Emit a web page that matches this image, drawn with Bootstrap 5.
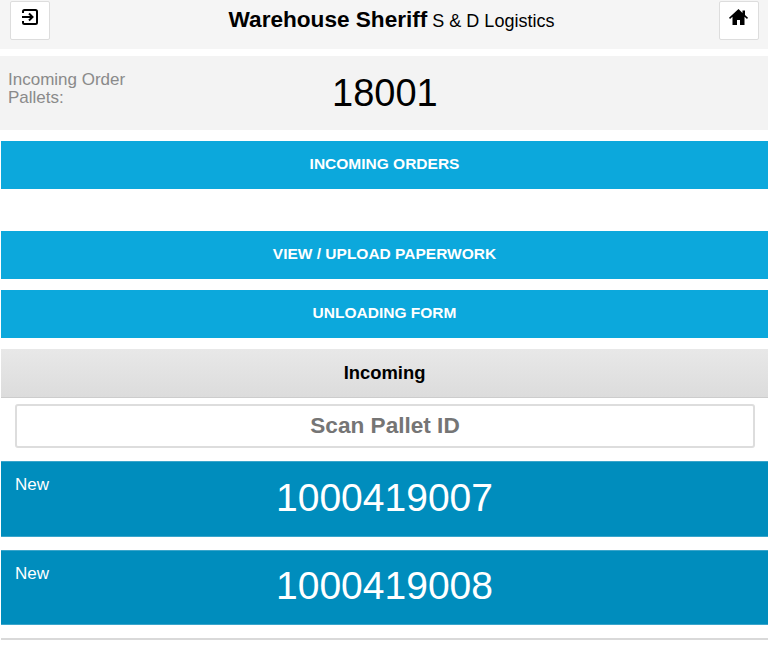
<!DOCTYPE html>
<html lang="en">
<head>
  <meta charset="UTF-8">
  <title>Warehouse Sheriff</title>
  <link href="https://cdn.jsdelivr.net/npm/bootstrap@5.3.0/dist/css/bootstrap.min.css" rel="stylesheet">
  <style>
    body { font-family: "Liberation Sans", Arial, sans-serif; background: #fff; color: #000; overflow: hidden; }
    .top-bar { height: 49px; background: #f5f5f5; padding: 1px 9px 0 10px; }
    .top-title { font-size: 18px; line-height: 1; padding-bottom: 9px; margin-left: 14px; white-space: nowrap; }
    .top-title strong { font-size: 22.6px; }
    .icon-btn { width: 40px; height: 39px; background: #fff; border: 1px solid #ddd; border-radius: 2px; padding: 0 0 8px; }
    .order-box { height: 74px; margin-top: 7px; background: #f3f3f3; }
    .order-label { width: 332px; padding: 15px 190px 0 8px; font-size: 17px; line-height: 18px; color: #8a8a8a; }
    .order-num { font-size: 38px; line-height: 1; padding-top: 18px; }
    .blue-btn { display: block; width: calc(100% - 1px); height: 48px; margin: 11px 0 0 1px; padding: 0 0 2px; background: #0ca8dc; color: #fff; border: 0; border-radius: 0; font-size: 15.5px; font-weight: 700; text-transform: uppercase; }
    .blue-btn:hover { background: #0ca8dc; color: #fff; }
    .blue-btn.far-gap { margin-top: 42px; }
    .list-bar { height: 49px; margin: 11px 0 0 1px; background: linear-gradient(#e8e8e8, #dcdcdc); border-bottom: 1px solid #ccc; font-size: 18.4px; font-weight: 700; }
    .scan-input.form-control { display: block; width: 740px; height: 44px; margin: 6px 0 13px 15px; border: 2px solid #ddd; border-radius: 3px; font-size: 22.6px; font-weight: 700; text-align: center; padding: 0; }
    .scan-input.form-control::placeholder { color: #757575; opacity: 1; }
    .pallet-row { height: 76px; margin-left: 1px; background: #008dbd; color: #fff; border: 1px solid #3aa5cb; border-width: 1px 0; }
    .pallet-row + .pallet-row { height: 75px; margin-top: 13px; }
    .pallet-state { left: 14px; top: 13px; font-size: 17px; line-height: 20px; }
    .pallet-id { font-size: 39px; line-height: 1; padding-top: 16px; }
    .pallet-row + .pallet-row .pallet-id { padding-top: 15px; }
    .end-rule { height: 2px; margin: 13px 0 0 1px; background: #d9d9d9; }
  </style>
</head>
<body>
  <div class="top-bar d-flex align-items-start justify-content-between">
    <button class="btn icon-btn d-flex align-items-center justify-content-center" type="button" aria-label="Sign out">
      <svg width="18" height="18" viewBox="0 0 18 18" fill="none" stroke="#000" stroke-width="2"><path d="M2 5V3.500A1.500 1.500 0 0 1 3.500 2h11A1.500 1.500 0 0 1 16 3.500v11a1.500 1.500 0 0 1-1.500 1.500h-11A1.500 1.500 0 0 1 2 14.500V13"/><path d="M1 9h10M8 5.500 11.500 9 8 12.500"/></svg>
    </button>
    <div class="top-title align-self-center"><strong>Warehouse Sheriff</strong> S &amp; D Logistics</div>
    <button class="btn icon-btn d-flex align-items-center justify-content-center" type="button" aria-label="Home">
      <svg width="19" height="16" viewBox="0 0 19 16" fill="#000"><path d="M9.500 0 0 8.800l1 1.100 2.500-2.200V16H8v-5h3v5h4.500V7.700l2.500 2.200 1-1.100-3-2.800V1.500h-2.500v2.400z"/></svg>
    </button>
  </div>

  <div class="order-box d-flex">
    <div class="order-label">Incoming Order Pallets:</div>
    <div class="order-num">18001</div>
  </div>

  <button class="btn blue-btn" type="button">Incoming Orders</button>
  <button class="btn blue-btn far-gap" type="button">View / Upload Paperwork</button>
  <button class="btn blue-btn" type="button">Unloading Form</button>

  <div class="list-bar d-flex align-items-center justify-content-center">Incoming</div>
  <input class="form-control scan-input" type="text" placeholder="Scan Pallet ID">

  <div class="pallet-row position-relative text-center">
    <span class="pallet-state position-absolute">New</span>
    <div class="pallet-id">1000419007</div>
  </div>
  <div class="pallet-row position-relative text-center">
    <span class="pallet-state position-absolute">New</span>
    <div class="pallet-id">1000419008</div>
  </div>
  <div class="end-rule"></div>

  <script src="https://cdn.jsdelivr.net/npm/bootstrap@5.3.0/dist/js/bootstrap.bundle.min.js"></script>
</body>
</html>
